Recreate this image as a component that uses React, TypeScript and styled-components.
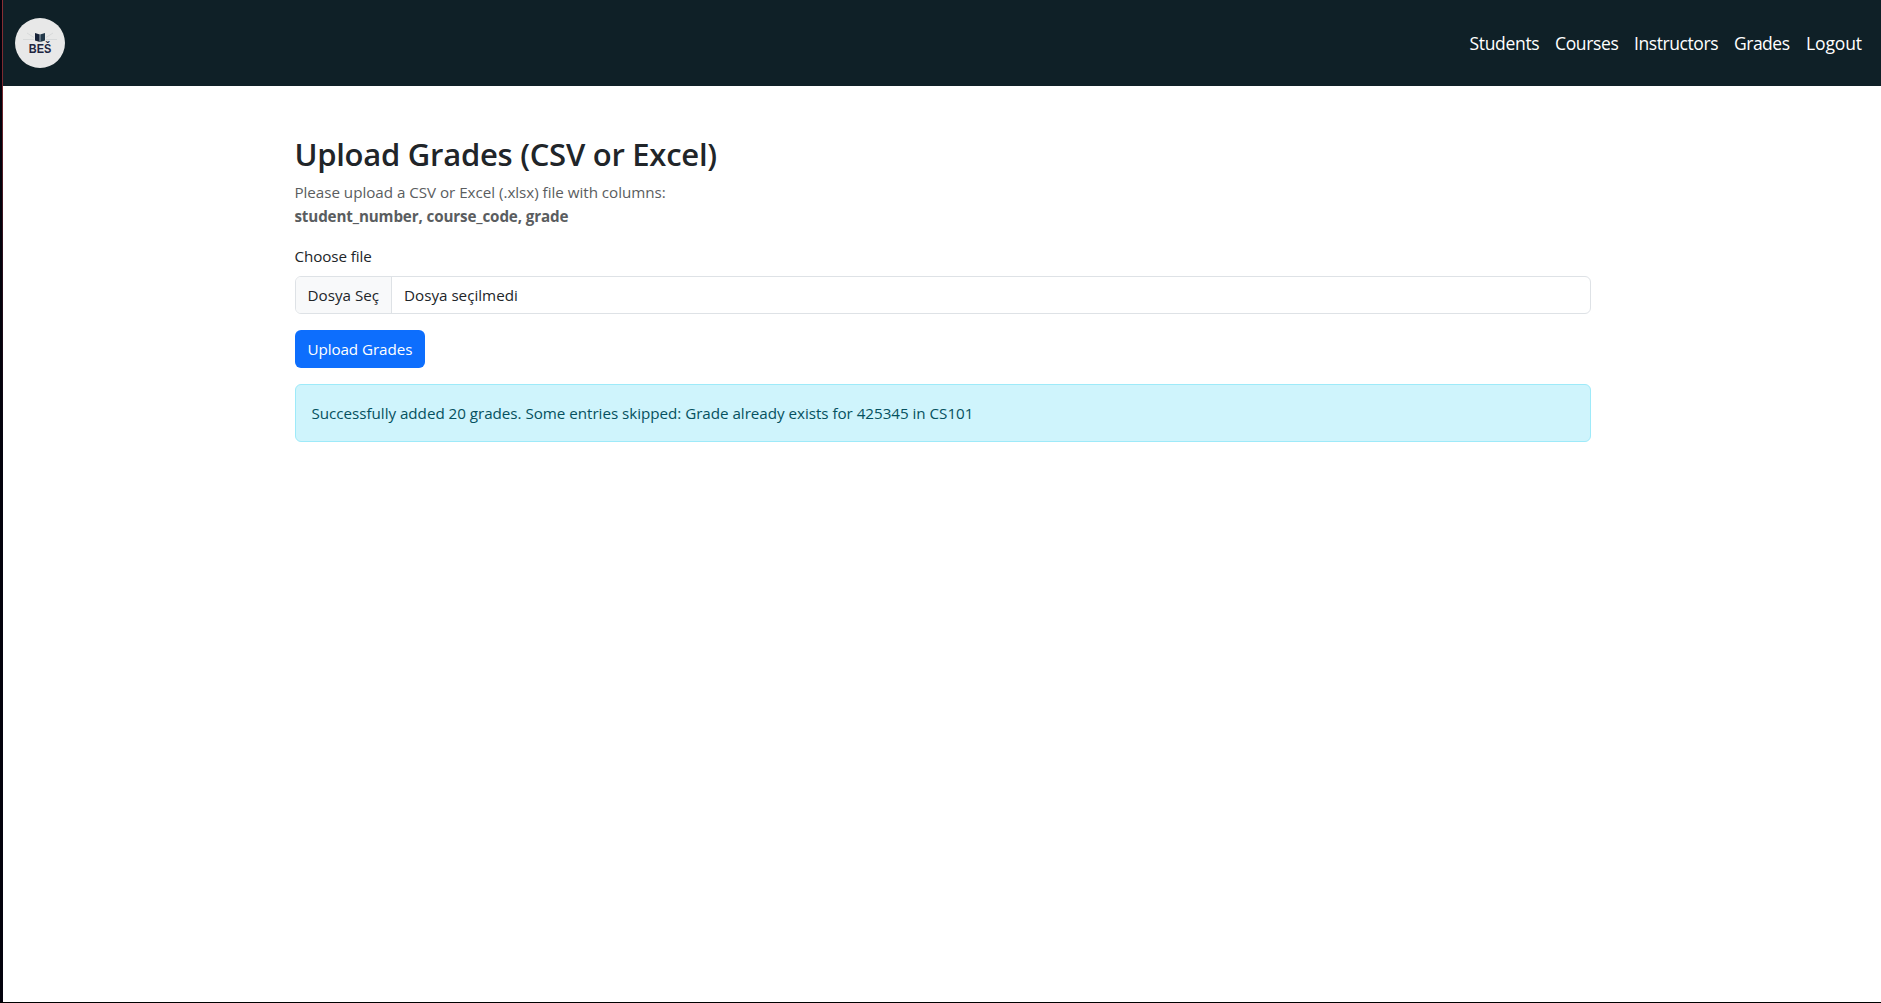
import React from 'react';
import styled, { createGlobalStyle } from 'styled-components';

const Global = createGlobalStyle`
  *, *::before, *::after { box-sizing: border-box; }
  body {
    margin: 0;
    background: #fff;
    color: #212529;
    font-family: 'Segoe UI', 'Open Sans', 'Noto Sans', sans-serif;
    font-size: 15.2px;
    line-height: 24px;
  }
`;

const Frame = styled.div`
  height: 1003px;
  border-bottom: 1px solid #000;
  display: flex;
  overflow: hidden;
`;

const Edge = styled.div`
  width: 3px;
  flex: none;
  background:
    linear-gradient(#8a3035 0, #7a2a30 80px, #2c0f1c 250px, #05030f 450px) right / 1px 100% no-repeat,
    #03020c;
`;

const Page = styled.div`
  flex: 1;
  min-width: 0;
`;

const Header = styled.header`
  height: 86px;
  padding: 0 18px 0 12px;
  background: #0f2027;
  display: flex;
  align-items: center;
  justify-content: space-between;
`;

const Logo = styled.svg`
  width: 50px;
  height: 50px;
  display: block;
`;

const Nav = styled.nav`
  display: flex;
  gap: 16px;
`;

const NavLink = styled.a<{ $width: number; $spacing: number }>`
  width: ${(p) => p.$width}px;
  color: #fff;
  font-size: 17.5px;
  line-height: 27px;
  letter-spacing: ${(p) => p.$spacing}px;
  white-space: nowrap;
  text-decoration: none;
`;

const Main = styled.main`
  width: 1296px;
  margin: 48px auto 0 292px;
  display: flex;
  flex-direction: column;
  align-items: flex-start;
`;

const Title = styled.h2`
  margin: 0 0 7px;
  padding-top: 1px;
  font-size: 31px;
  font-weight: 600;
  line-height: 38px;
  letter-spacing: -0.26px;
  text-indent: -0.6px;
  white-space: nowrap;
`;

const Hint = styled.p`
  margin: 0 0 16px -0.6px;
  color: #5a5d60;
  letter-spacing: -0.03px;
`;

const Strong = styled.strong`
  font-weight: 700;
  letter-spacing: -0.13px;
`;

const Label = styled.label`
  margin: 0 0 8px -0.6px;
  letter-spacing: -0.08px;
`;

const FileField = styled.div`
  align-self: stretch;
  height: 38px;
  border: 1px solid #dee2e6;
  border-radius: 6px;
  display: flex;
  overflow: hidden;
  margin-bottom: 16px;
`;

const FileButton = styled.span`
  width: 96px;
  padding: 6px 0 6px 11.5px;
  background: #f8f9fa;
  border-right: 1px solid #dee2e6;
  white-space: nowrap;
`;

const FileName = styled.span`
  padding: 6px 12px;
`;

const Submit = styled.button`
  width: 130px;
  height: 38px;
  margin: 0 0 16px;
  padding: 0 0 0 12.4px;
  border: 0;
  border-radius: 6px;
  background: #0d6efd;
  color: #fff;
  font: inherit;
  text-align: left;
  letter-spacing: -0.06px;
  white-space: nowrap;
`;

const Alert = styled.div`
  align-self: stretch;
  height: 58px;
  padding: 16px 15.5px;
  border: 1px solid #9eeaf9;
  border-radius: 6px;
  background: #cff4fc;
  color: #055160;
  letter-spacing: -0.03px;
`;

const links = [
  { label: 'Students', width: 69.5, spacing: -0.32 },
  { label: 'Courses', width: 63, spacing: -0.36 },
  { label: 'Instructors', width: 84, spacing: -0.42 },
  { label: 'Grades', width: 56, spacing: -0.5 },
  { label: 'Logout', width: 57, spacing: -0.12 },
];

const BrandLogo = () => (
  <Logo viewBox="0 0 50 50" aria-label="BEŠ">
    <circle cx="25" cy="25" r="25" fill="#e8e8e8" />
    <g stroke="#d2d4d5" strokeWidth="0.8" fill="none">
      <path d="M8 21.5h11M31 21.5h11M12 15l7 4.5M38 15l-7 4.5" />
    </g>
    <path d="M20 15l4.8 1.4v7.6l-4.8-1.4z" fill="#172238" />
    <path d="M30 15l-4.8 1.4v7.6l4.8-1.4z" fill="#23394a" />
    <path d="M25 16.6v7" stroke="#8fa3b0" strokeWidth="0.7" />
    <text x="25" y="35" textAnchor="middle" textLength="22.5" lengthAdjust="spacingAndGlyphs" fontFamily="Liberation Sans, sans-serif" fontWeight="700" fontSize="12.6" fill="#202540">BEŠ</text>
  </Logo>
);

export default function App() {
  return (
    <Frame>
      <Global />
      <Edge />
      <Page>
        <Header>
          <BrandLogo />
          <Nav>
            {links.map((l) => (
              <NavLink key={l.label} $width={l.width} $spacing={l.spacing}>{l.label}</NavLink>
            ))}
          </Nav>
        </Header>
        <Main>
          <Title>Upload Grades (CSV or Excel)</Title>
          <Hint>
            Please upload a CSV or Excel (.xlsx) file with columns:
            <br />
            <Strong>student_number, course_code, grade</Strong>
          </Hint>
          <Label>Choose file</Label>
          <FileField>
            <FileButton>Dosya Seç</FileButton>
            <FileName>Dosya seçilmedi</FileName>
          </FileField>
          <Submit>Upload Grades</Submit>
          <Alert>Successfully added 20 grades. Some entries skipped: Grade already exists for 425345 in CS101</Alert>
        </Main>
      </Page>
    </Frame>
  );
}
